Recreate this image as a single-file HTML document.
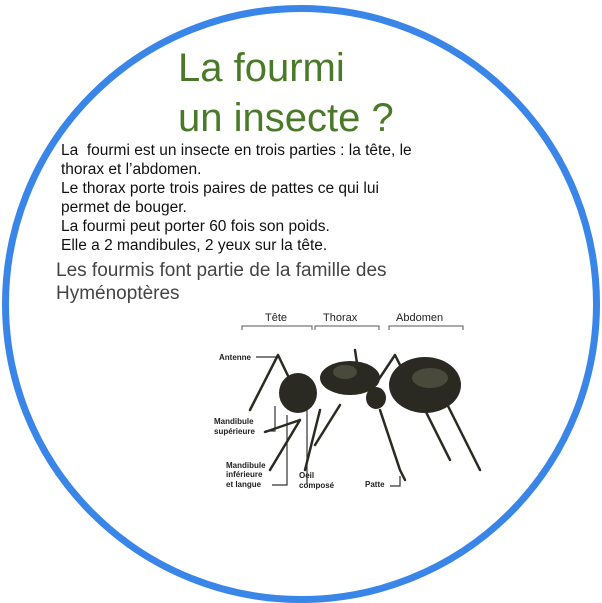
<!DOCTYPE html>
<html><head><meta charset="utf-8"><style>
body{margin:0;width:602px;height:602px;background:#fff;position:relative;overflow:hidden;font-family:"Liberation Sans",sans-serif}
.c{position:absolute;left:2px;top:5px;width:584px;height:584px;border:7px solid #3a86e8;border-radius:50%}
.t{position:absolute;left:178px;color:#4a7a28;font-size:40px;line-height:50px;top:43px}
.b{position:absolute;left:61px;top:141px;font-size:15.5px;line-height:19px;color:#111}
.h{position:absolute;left:56px;top:259px;font-size:19px;line-height:23px;color:#444}
svg{position:absolute;left:0;top:0}
</style></head><body>
<div class="c"></div>
<div class="t">La fourmi<br>un insecte ?</div>
<div class="b">La&nbsp; fourmi est un insecte en trois parties : la tête, le<br>thorax et l’abdomen.<br>Le thorax porte trois paires de pattes ce qui lui<br>permet de bouger.<br>La fourmi peut porter 60 fois son poids.<br>Elle a 2 mandibules, 2 yeux sur la tête.</div>
<div class="h">Les fourmis font partie de la famille des<br>Hyménoptères</div>
<svg width="602" height="602" font-family="Liberation Sans,sans-serif">
<g font-size="11" fill="#222"><text x="265" y="321">Tête</text><text x="323" y="321">Thorax</text><text x="396" y="321">Abdomen</text></g>
<g stroke="#555" fill="none" stroke-width="1"><path d="M242 330v-4h70v4M315 330v-4h64v4M389 330v-4h74v4"/></g>
<g font-size="8" font-weight="bold" fill="#222"><text x="219" y="360">Antenne</text><text x="214" y="424">Mandibule</text><text x="214" y="434">supérieure</text><text x="226" y="468">Mandibule</text><text x="226" y="477">inférieure</text><text x="226" y="487">et langue</text><text x="299" y="478">Oeil</text><text x="299" y="488">composé</text><text x="365" y="487">Patte</text></g>
<g stroke="#333" stroke-width="1.2" fill="none"><path d="M256 357h20M265 431h10v-25M272 485h15v-70M307 485v-75M390 486h10v-10"/></g>
<g stroke="#2a2a22" stroke-width="2.5" fill="none" stroke-linecap="round">
<path d="M278 355l-28 55M278 355l12 25M355 350l3 20M395 355l-20 30M395 355l15 30M300 420l-30 50M320 410l-15 60M340 405l-25 40M380 410l20 60 5 10M420 400l30 60M440 390l40 80M300 420l-35 12"/></g>
<g fill="#2b2a22">
<ellipse cx="298" cy="393" rx="19" ry="20"/>
<ellipse cx="350" cy="378" rx="30" ry="17"/>
<ellipse cx="376" cy="398" rx="10" ry="11"/>
<ellipse cx="425" cy="385" rx="36" ry="28"/>
</g>
<g fill="#6a6a55" opacity=".5"><ellipse cx="430" cy="378" rx="18" ry="10"/><ellipse cx="345" cy="372" rx="12" ry="7"/></g>
</svg>
</body></html>
